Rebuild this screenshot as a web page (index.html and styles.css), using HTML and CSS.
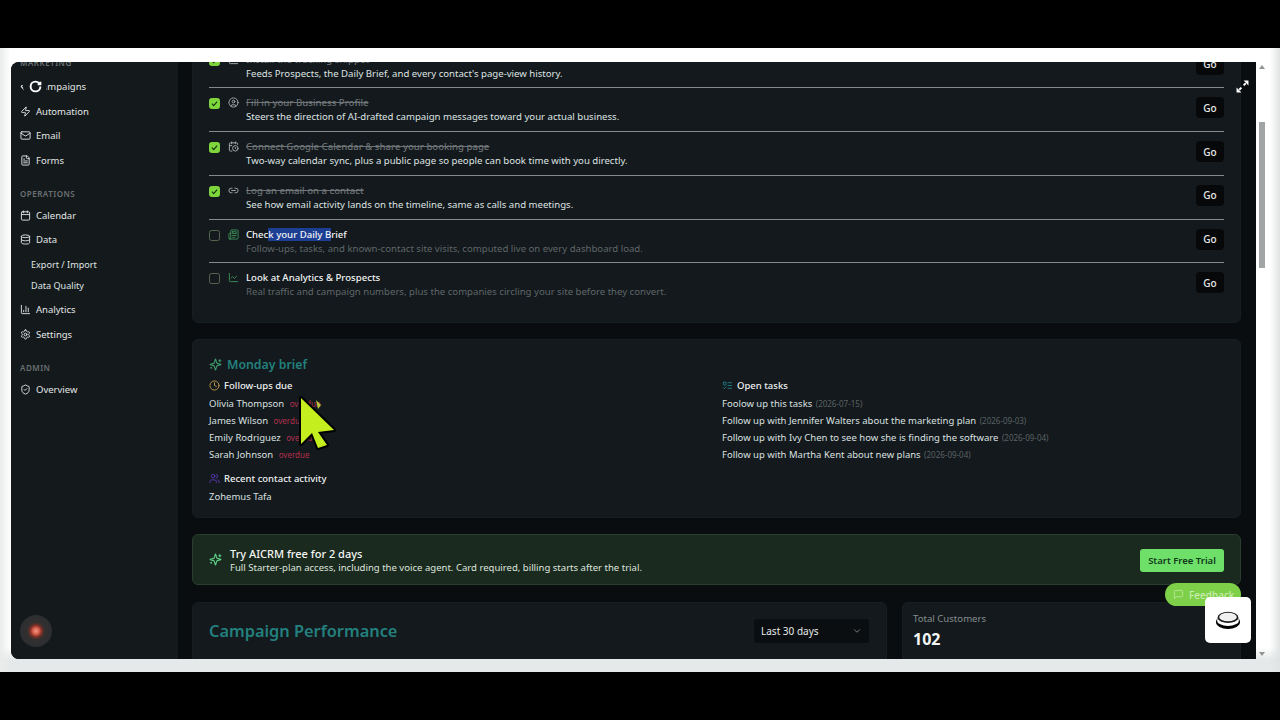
FILE: index.html

```html
<!DOCTYPE html>
<html lang="en">
<head>
<meta charset="UTF-8" />
<title>AICRM dashboard</title>
<link rel="stylesheet" href="styles.css">
</head>
<body>

<svg class="sprite" aria-hidden="true">
  <symbol id="i-megaphone" viewBox="0 0 24 24"><path d="m3 11 18-5v12L3 14v-3z"/><path d="M11.6 16.8a3 3 0 1 1-5.8-1.6"/></symbol>
  <symbol id="i-zap" viewBox="0 0 24 24"><path d="M4 14a1 1 0 0 1-.78-1.63l9.9-10.2a.5.5 0 0 1 .86.46l-1.92 6.02A1 1 0 0 0 13 10h7a1 1 0 0 1 .78 1.63l-9.9 10.2a.5.5 0 0 1-.86-.46l1.92-6.02A1 1 0 0 0 11 14z"/></symbol>
  <symbol id="i-mail" viewBox="0 0 24 24"><rect x="2" y="4" width="20" height="16" rx="2"/><path d="m22 7-8.97 5.7a1.94 1.94 0 0 1-2.06 0L2 7"/></symbol>
  <symbol id="i-file" viewBox="0 0 24 24"><path d="M15 2H6a2 2 0 0 0-2 2v16a2 2 0 0 0 2 2h12a2 2 0 0 0 2-2V7Z"/><path d="M14 2v4a2 2 0 0 0 2 2h4"/><path d="M10 9H8M16 13H8M16 17H8"/></symbol>
  <symbol id="i-calendar" viewBox="0 0 24 24"><path d="M8 2v4M16 2v4"/><rect x="3" y="4" width="18" height="18" rx="2"/><path d="M3 10h18"/></symbol>
  <symbol id="i-database" viewBox="0 0 24 24"><ellipse cx="12" cy="5" rx="9" ry="3"/><path d="M3 5V19A9 3 0 0 0 21 19V5"/><path d="M3 12A9 3 0 0 0 21 12"/></symbol>
  <symbol id="i-bars" viewBox="0 0 24 24"><path d="M3 3v16a2 2 0 0 0 2 2h16"/><path d="M18 17V9M13 17V5M8 17v-3"/></symbol>
  <symbol id="i-cog" viewBox="0 0 24 24"><path d="M12.22 2h-.44a2 2 0 0 0-2 2v.18a2 2 0 0 1-1 1.73l-.43.25a2 2 0 0 1-2 0l-.15-.08a2 2 0 0 0-2.73.73l-.22.38a2 2 0 0 0 .73 2.73l.15.1a2 2 0 0 1 1 1.72v.51a2 2 0 0 1-1 1.74l-.15.09a2 2 0 0 0-.73 2.73l.22.38a2 2 0 0 0 2.73.73l.15-.08a2 2 0 0 1 2 0l.43.25a2 2 0 0 1 1 1.73V20a2 2 0 0 0 2 2h.44a2 2 0 0 0 2-2v-.18a2 2 0 0 1 1-1.73l.43-.25a2 2 0 0 1 2 0l.15.08a2 2 0 0 0 2.73-.73l.22-.39a2 2 0 0 0-.73-2.73l-.15-.08a2 2 0 0 1-1-1.74v-.5a2 2 0 0 1 1-1.74l.15-.09a2 2 0 0 0 .73-2.73l-.22-.38a2 2 0 0 0-2.73-.73l-.15.08a2 2 0 0 1-2 0l-.43-.25a2 2 0 0 1-1-1.73V4a2 2 0 0 0-2-2z"/><circle cx="12" cy="12" r="3"/></symbol>
  <symbol id="i-shield" viewBox="0 0 24 24"><path d="M20 13c0 5-3.5 7.5-7.66 8.95a1 1 0 0 1-.67-.01C7.5 20.5 4 18 4 13V6a1 1 0 0 1 1-1c2 0 4.5-1.2 6.24-2.72a1.17 1.17 0 0 1 1.52 0C14.51 3.81 17 5 19 5a1 1 0 0 1 1 1z"/><path d="m9 12 2 2 4-4"/></symbol>
  <symbol id="i-user" viewBox="0 0 24 24"><circle cx="12" cy="12" r="10"/><circle cx="12" cy="10" r="3"/><path d="M7 20.662V19a2 2 0 0 1 2-2h6a2 2 0 0 1 2 2v1.662"/></symbol>
  <symbol id="i-calclock" viewBox="0 0 24 24"><path d="M21 7.5V6a2 2 0 0 0-2-2H5a2 2 0 0 0-2 2v14a2 2 0 0 0 2 2h3.5"/><path d="M16 2v4M8 2v4M3 10h5M17.5 17.5 16 16.3V14"/><circle cx="16" cy="16" r="6"/></symbol>
  <symbol id="i-link" viewBox="0 0 24 24"><path d="M9 17H7A5 5 0 0 1 7 7h2"/><path d="M15 7h2a5 5 0 1 1 0 10h-2"/><path d="M8 12h8"/></symbol>
  <symbol id="i-news" viewBox="0 0 24 24"><path d="M4 22h16a2 2 0 0 0 2-2V4a2 2 0 0 0-2-2H8a2 2 0 0 0-2 2v16a2 2 0 0 1-2 2Zm0 0a2 2 0 0 1-2-2v-9c0-1.1.9-2 2-2h2"/><path d="M18 14h-8M15 18h-5M10 6h8v4h-8V6Z"/></symbol>
  <symbol id="i-line" viewBox="0 0 24 24"><path d="M3 3v16a2 2 0 0 0 2 2h16"/><path d="m19 9-5 5-4-4-3 3"/></symbol>
  <symbol id="i-sparkle" viewBox="0 0 24 24"><path d="M9.937 15.5A2 2 0 0 0 8.5 14.063l-6.135-1.582a.5.5 0 0 1 0-.962L8.5 9.936A2 2 0 0 0 9.937 8.5l1.582-6.135a.5.5 0 0 1 .963 0L14.063 8.5A2 2 0 0 0 15.5 9.937l6.135 1.581a.5.5 0 0 1 0 .964L15.5 14.063a2 2 0 0 0-1.437 1.437l-1.582 6.135a.5.5 0 0 1-.963 0z"/><path d="M20 3v4M22 5h-4M4 17v2M5 18H3"/></symbol>
  <symbol id="i-clock" viewBox="0 0 24 24"><circle cx="12" cy="12" r="10"/><path d="M12 6v6l4 2"/></symbol>
  <symbol id="i-users" viewBox="0 0 24 24"><path d="M16 21v-2a4 4 0 0 0-4-4H6a4 4 0 0 0-4 4v2"/><circle cx="9" cy="7" r="4"/><path d="M22 21v-2a4 4 0 0 0-3-3.87M16 3.13a4 4 0 0 1 0 7.75"/></symbol>
  <symbol id="i-todo" viewBox="0 0 24 24"><rect x="3" y="5" width="6" height="6" rx="1"/><path d="m3 17 2 2 4-4M13 6h8M13 12h8M13 18h8"/></symbol>
  <symbol id="i-chat" viewBox="0 0 24 24"><path d="M21 15a2 2 0 0 1-2 2H7l-4 4V5a2 2 0 0 1 2-2h14a2 2 0 0 1 2 2z"/></symbol>
  <symbol id="i-down" viewBox="0 0 24 24"><path d="m6 9 6 6 6-6"/></symbol>
  <symbol id="i-check" viewBox="0 0 24 24"><path d="M5 12.5 10 17.5 19 7"/></symbol>
</svg>

<div class="band"></div>

<div class="desktop">
  <div class="window">

    <aside class="sidebar">
      <div class="nav-label nav-label-first">MARKETING</div>
      <div class="nav-item"><svg class="ico"><use href="#i-megaphone"/></svg>Campaigns</div>
      <div class="nav-item"><svg class="ico"><use href="#i-zap"/></svg>Automation</div>
      <div class="nav-item"><svg class="ico"><use href="#i-mail"/></svg>Email</div>
      <div class="nav-item"><svg class="ico"><use href="#i-file"/></svg>Forms</div>

      <div class="nav-label">OPERATIONS</div>
      <div class="nav-item"><svg class="ico"><use href="#i-calendar"/></svg>Calendar</div>
      <div class="nav-item"><svg class="ico"><use href="#i-database"/></svg>Data</div>
      <div class="nav-sub">
        <div class="nav-subitem">Export / Import</div>
        <div class="nav-subitem">Data Quality</div>
      </div>
      <div class="nav-item"><svg class="ico"><use href="#i-bars"/></svg>Analytics</div>
      <div class="nav-item"><svg class="ico"><use href="#i-cog"/></svg>Settings</div>

      <div class="nav-label">ADMIN</div>
      <div class="nav-item"><svg class="ico"><use href="#i-shield"/></svg>Overview</div>
    </aside>

    <main class="main">
      <section class="card checklist">
        <div class="step">
          <span class="box done"><svg class="tick"><use href="#i-check"/></svg></span>
          <svg class="ico step-ico"><use href="#i-line"/></svg>
          <div class="step-text">
            <div class="step-title struck">Install the tracking snippet</div>
            <div class="step-desc">Feeds Prospects, the Daily Brief, and every contact's page-view history.</div>
          </div>
          <button class="go">Go</button>
        </div>
        <div class="step">
          <span class="box done"><svg class="tick"><use href="#i-check"/></svg></span>
          <svg class="ico step-ico"><use href="#i-user"/></svg>
          <div class="step-text">
            <div class="step-title struck">Fill in your Business Profile</div>
            <div class="step-desc">Steers the direction of AI-drafted campaign messages toward your actual business.</div>
          </div>
          <button class="go">Go</button>
        </div>
        <div class="step">
          <span class="box done"><svg class="tick"><use href="#i-check"/></svg></span>
          <svg class="ico step-ico"><use href="#i-calclock"/></svg>
          <div class="step-text">
            <div class="step-title struck">Connect Google Calendar &amp; share your booking page</div>
            <div class="step-desc">Two-way calendar sync, plus a public page so people can book time with you directly.</div>
          </div>
          <button class="go">Go</button>
        </div>
        <div class="step">
          <span class="box done"><svg class="tick"><use href="#i-check"/></svg></span>
          <svg class="ico step-ico"><use href="#i-link"/></svg>
          <div class="step-text">
            <div class="step-title struck">Log an email on a contact</div>
            <div class="step-desc">See how email activity lands on the timeline, same as calls and meetings.</div>
          </div>
          <button class="go">Go</button>
        </div>
        <div class="step">
          <span class="box"></span>
          <svg class="ico step-ico green"><use href="#i-news"/></svg>
          <div class="step-text">
            <div class="step-title">Chec<span class="selected">k your Daily B</span>rief</div>
            <div class="step-desc dim">Follow-ups, tasks, and known-contact site visits, computed live on every dashboard load.</div>
          </div>
          <button class="go">Go</button>
        </div>
        <div class="step step-last">
          <span class="box"></span>
          <svg class="ico step-ico green"><use href="#i-line"/></svg>
          <div class="step-text">
            <div class="step-title">Look at Analytics &amp; Prospects</div>
            <div class="step-desc dim">Real traffic and campaign numbers, plus the companies circling your site before they convert.</div>
          </div>
          <button class="go">Go</button>
        </div>
      </section>

      <section class="card brief">
        <h2 class="brief-title"><svg class="ico brief-spark"><use href="#i-sparkle"/></svg>Monday brief</h2>
        <div class="brief-cols">
          <div>
            <div class="brief-head"><svg class="ico amber"><use href="#i-clock"/></svg>Follow-ups due</div>
            <div class="brief-line">Olivia Thompson <span class="overdue">overdue</span></div>
            <div class="brief-line">James Wilson <span class="overdue">overdue</span></div>
            <div class="brief-line">Emily Rodriguez <span class="overdue">overdue</span></div>
            <div class="brief-line">Sarah Johnson <span class="overdue">overdue</span></div>
            <div class="brief-head brief-head-second"><svg class="ico purple"><use href="#i-users"/></svg>Recent contact activity</div>
            <div class="brief-line">Zohemus Tafa</div>
          </div>
          <div>
            <div class="brief-head"><svg class="ico teal"><use href="#i-todo"/></svg>Open tasks</div>
            <div class="brief-line">Foolow up this tasks <span class="date">(2026-07-15)</span></div>
            <div class="brief-line">Follow up with Jennifer Walters about the marketing plan <span class="date">(2026-09-03)</span></div>
            <div class="brief-line">Follow up with Ivy Chen to see how she is finding the software <span class="date">(2026-09-04)</span></div>
            <div class="brief-line">Follow up with Martha Kent about new plans <span class="date">(2026-09-04)</span></div>
          </div>
        </div>
      </section>

      <section class="trial">
        <svg class="ico trial-spark"><use href="#i-sparkle"/></svg>
        <div class="trial-text">
          <div class="trial-title">Try AICRM free for 2 days</div>
          <div class="trial-desc">Full Starter-plan access, including the voice agent. Card required, billing starts after the trial.</div>
        </div>
        <button class="trial-btn">Start Free Trial</button>
      </section>

      <div class="bottom-row">
        <section class="card perf">
          <h2 class="perf-title">Campaign Performance</h2>
          <div class="range">Last 30 days<svg class="ico range-chev"><use href="#i-down"/></svg></div>
        </section>
        <section class="card total">
          <div class="total-label">Total Customers</div>
          <div class="total-num">102</div>
        </section>
      </div>
    </main>
  </div>

  <div class="scrollbar">
    <span class="sb-up"></span>
    <span class="sb-thumb"></span>
    <span class="sb-down"></span>
  </div>

  <!-- things floating over the page -->
  <div class="spinner">
    <svg viewBox="0 0 24 24"><path d="M21 12a9 9 0 1 1-9-9c2.52 0 4.93 1 6.74 2.74L21 8"/><path d="M21 3v5h-5"/></svg>
  </div>
  <svg class="expand" viewBox="0 0 24 24">
    <path class="expand-head" d="M14 1h9v9zM10 23H1v-9z"/>
    <path class="expand-shaft" d="M18 6l-4 4M6 18l4-4"/>
  </svg>
  <div class="rec"></div>
  <div class="feedback"><svg class="ico"><use href="#i-chat"/></svg>Feedback</div>
  <div class="help-btn">
    <svg viewBox="0 0 24 18">
      <ellipse cx="12" cy="11" rx="12" ry="7" fill="#000"/>
      <ellipse cx="12" cy="9.4" rx="11" ry="5.6" fill="#fff"/>
      <ellipse cx="12" cy="6.4" rx="10.4" ry="5.6" fill="#1c1c1c"/>
      <ellipse cx="12" cy="6" rx="8.8" ry="4.3" fill="#f1f1f1"/>
    </svg>
  </div>
  <svg class="cursor" viewBox="0 0 50 66">
    <path class="cursor-arrow" d="M11 8V54L22 43 28 58 37 55 28 42 44 40z"/>
    <path class="cursor-mark" d="M26 10 31 15 28 19z"/>
  </svg>
</div>

<div class="band"></div>

</body>
</html>
```

FILE: styles.css

```css
* { box-sizing: border-box; }
html, body {
  margin: 0; padding: 0; height: 100%;
  background: #000;
  overflow: hidden;
  color: #e9ecec;
  font-family: "Noto Sans", "Open Sans", sans-serif;
  font-size: 10px;
}

.sprite { display: none; }

.band { height: 48px; background: #000; }

.desktop {
  position: relative;
  height: 624px;
  padding: 14px 24px 13px 11px;
  background:
    linear-gradient(90deg, #e9ecea 0, transparent 0.8%, transparent 99.2%, #e0e3e3 100%),
    linear-gradient(180deg, #fff 96%, #e6e9e9 98%);
}

.window {
  display: flex;
  height: 597px;
  background: #090d0f;
  border-radius: 8px 0 0 8px;
  overflow: hidden;
}

.ico {
  width: 11px;
  height: 11px;
  fill: none;
  stroke: currentColor;
  stroke-width: 2;
  stroke-linecap: round;
  stroke-linejoin: round;
  flex: none;
}

/* sidebar */
.sidebar {
  width: 167px;
  flex: none;
  background: #14191c;
  padding-left: 9px;
}

.nav-label {
  height: 12px;
  line-height: 12px;
  margin: 15px 0 3px;
  font-size: 8px;
  font-weight: 600;
  letter-spacing: 0.5px;
  color: #6a7173;
}
.nav-label-first { margin-top: -5px; margin-bottom: 5px; }

.nav-item {
  display: flex;
  align-items: center;
  gap: 5px;
  height: 24.7px;
  font-size: 9.5px;
  color: #e3e6e6;
}

.nav-sub { padding: 3px 0 1.5px 11px; }
.nav-subitem {
  height: 20.5px;
  line-height: 20.5px;
  font-size: 9.1px;
  color: #dfe3e3;
}

/* main column */
.main {
  flex: 1;
  min-width: 0;
  padding: 0 15px 0 14px;
  overflow: hidden;
}

.card {
  background: #13191c;
  border: 1px solid #171e21;
  border-radius: 6px;
}

.checklist {
  margin-top: -18.5px;
  padding: 0 16px 15px;
}

.step {
  display: flex;
  align-items: flex-start;
  height: 43.75px;
  padding-top: 8px;
  border-bottom: 1px solid #858a8c;
}
.step-last { border-bottom: 0; }

.box {
  flex: none;
  width: 11px;
  height: 11px;
  margin-top: 2px;
  border: 1px solid #55664f;
  border-radius: 2.5px;
}
.box.done {
  background: #7fd63c;
  border-color: #7fd63c;
}
.tick {
  display: block;
  width: 9px;
  height: 9px;
  fill: none;
  stroke: #12300c;
  stroke-width: 3;
}

.step-ico { margin: 1px 0 0 8px; color: #a9b0b0; }
.step-ico.green { color: #3f8f5c; }

.step-text { flex: 1; margin-left: 7px; }
.step-title {
  height: 14px;
  line-height: 14px;
  font-size: 9.6px;
  font-weight: 500;
  color: #f2f4f4;
}
.step-title.struck {
  color: #6d7376;
  text-decoration: line-through;
}
.selected { background: #1c3f94; }
.step-desc {
  height: 14px;
  line-height: 14px;
  font-size: 9.6px;
  color: #dfe3e3;
}
.step-desc.dim { color: #5f6669; }

.go {
  flex: none;
  width: 28px;
  height: 21px;
  margin-top: 1px;
  background: #060809;
  border: 0;
  border-radius: 4px;
  color: #e6e9e9;
  font: 500 10px "Noto Sans", sans-serif;
}

/* monday brief */
.brief {
  height: 179px;
  margin-top: 16px;
  padding: 16px 16px 0;
}
.brief-title {
  display: flex;
  align-items: center;
  gap: 5px;
  height: 16px;
  margin: 0 0 4px;
  font-size: 12.3px;
  font-weight: 600;
  color: #23807e;
}
.brief-spark { width: 13px; height: 13px; color: #3f9a6c; }

.brief-cols {
  display: grid;
  grid-template-columns: 1fr 1fr;
  gap: 11px;
}
.brief-head {
  display: flex;
  align-items: center;
  gap: 4px;
  height: 18.5px;
  font-size: 9.5px;
  font-weight: 500;
  color: #eef0f0;
}
.brief-head-second { margin-top: 6.5px; }
.brief-line {
  height: 17px;
  line-height: 17px;
  font-size: 9.5px;
  color: #dce0e0;
}
.overdue { margin-left: 3px; font-size: 8px; color: #b2304f; }
.date { margin-left: 1px; font-size: 8px; color: #5b6265; }
.amber { color: #c59a48; }
.purple { color: #5b3bb5; }
.teal { color: #1f7f86; }

/* trial */
.trial {
  display: flex;
  align-items: center;
  height: 51px;
  margin-top: 16px;
  padding: 0 16px;
  background: #1a2a1e;
  border: 1px solid #2b3d2d;
  border-radius: 6px;
}
.trial-spark { width: 13px; height: 13px; color: #5fd28a; }
.trial-text { flex: 1; margin: 3px 0 0 8px; }
.trial-title {
  height: 14px;
  line-height: 14px;
  font-size: 11px;
  font-weight: 500;
  color: #f4f6f4;
}
.trial-desc {
  height: 14px;
  line-height: 14px;
  font-size: 9.56px;
  color: #dfe4df;
}
.trial-btn {
  flex: none;
  width: 84px;
  height: 23px;
  margin-top: 1px;
  background: #6ee06a;
  border: 0;
  border-radius: 3px;
  color: #0f3a1a;
  font: 600 9.5px "Noto Sans", sans-serif;
}

/* bottom row */
.bottom-row {
  display: flex;
  gap: 15px;
  margin-top: 17px;
}
.perf {
  display: flex;
  align-items: flex-start;
  justify-content: space-between;
  width: 695px;
  height: 120px;
  padding: 16px 17px 0 16px;
}
.perf-title {
  margin: 0;
  line-height: 24px;
  font-size: 16.35px;
  font-weight: 600;
  color: #23807e;
}
.range {
  display: flex;
  align-items: center;
  justify-content: space-between;
  width: 115px;
  height: 24px;
  padding: 0 7px;
  background: #0a0e10;
  border-radius: 3px;
  font-size: 10px;
  color: #e6e9e9;
}
.range-chev { width: 10px; height: 10px; color: #8a9092; }
.total {
  flex: 1;
  height: 120px;
  padding: 9px 10px 0;
}
.total-label { line-height: 14px; font-size: 9.6px; color: #868d8f; }
.total-num {
  margin-top: 3px;
  line-height: 20px;
  font-size: 16px;
  font-weight: 700;
  color: #f4f6f6;
}

/* browser scrollbar */
.scrollbar {
  position: absolute;
  top: 14px;
  left: 1259px;
  width: 6px;
  height: 597px;
}
.sb-up, .sb-down {
  position: absolute;
  left: 0;
  width: 0;
  height: 0;
  border: 3px solid transparent;
}
.sb-up { top: 0; border-bottom: 4px solid #8f9496; }
.sb-down { bottom: 0; border-top: 4px solid #8f9496; }
.sb-thumb {
  position: absolute;
  top: 60px;
  left: 0;
  width: 6px;
  height: 146px;
  background: #a2a5a6;
}

/* overlays */
.spinner {
  position: absolute;
  top: 26px;
  left: 23px;
  width: 24px;
  height: 24px;
  padding: 5.5px;
  background: #14191c;
  border-radius: 50%;
}
.spinner svg {
  display: block;
  width: 13px;
  height: 13px;
  fill: none;
  stroke: #fff;
  stroke-width: 3.6;
}
.expand {
  position: absolute;
  top: 32px;
  left: 1236px;
  width: 13px;
  height: 13px;
}
.expand-head { fill: #fff; }
.expand-shaft { fill: none; stroke: #fff; stroke-width: 3.4; }
.rec {
  position: absolute;
  top: 567px;
  left: 20px;
  width: 32px;
  height: 32px;
  border-radius: 50%;
  background: radial-gradient(circle, #ee9a86 0, #d9604c 14%, #7a2e26 26%, #33302f 38%, #2b2e31 70%, #1a1f22 100%);
}
.feedback {
  position: absolute;
  top: 535px;
  left: 1165px;
  display: flex;
  align-items: center;
  gap: 5px;
  width: 76px;
  height: 23px;
  padding-left: 8px;
  background: #7ed048;
  border-radius: 12px;
  font-size: 10px;
  font-weight: 500;
  color: #c9ecb0;
}
.feedback .ico { stroke-width: 1.6; }
.help-btn {
  position: absolute;
  top: 549px;
  left: 1205px;
  display: flex;
  align-items: center;
  justify-content: center;
  width: 46px;
  height: 46px;
  background: #fff;
  border-radius: 5px;
}
.help-btn svg { width: 24px; height: 18px; }
.cursor {
  position: absolute;
  top: 342px;
  left: 290px;
  width: 50px;
  height: 66px;
  overflow: visible;
}
.cursor-arrow {
  fill: #c5ee1e;
  stroke: #000;
  stroke-width: 4;
  stroke-linejoin: round;
  paint-order: stroke;
}
.cursor-mark { fill: #b9c63a; }
```
